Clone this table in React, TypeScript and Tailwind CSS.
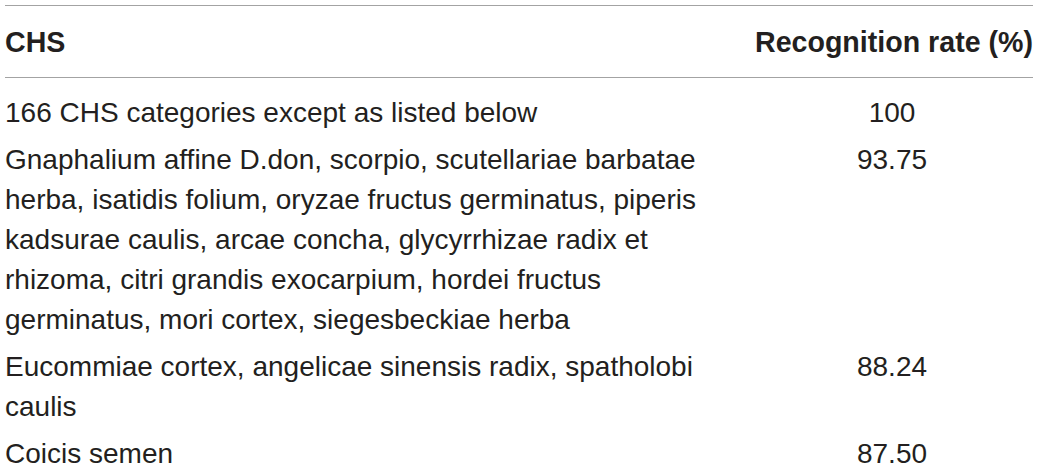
const rows = [
  { chs: ['166 CHS categories except as listed below'], rate: '100' },
  {
    chs: [
      'Gnaphalium affine D.don, scorpio, scutellariae barbatae',
      'herba, isatidis folium, oryzae fructus germinatus, piperis',
      'kadsurae caulis, arcae concha, glycyrrhizae radix et',
      'rhizoma, citri grandis exocarpium, hordei fructus',
      'germinatus, mori cortex, siegesbeckiae herba',
    ],
    rate: '93.75',
  },
  { chs: ['Eucommiae cortex, angelicae sinensis radix, spatholobi', 'caulis'], rate: '88.24' },
  { chs: ['Coicis semen'], rate: '87.50' },
]

export default function App() {
  return (
    <div className="w-[1043px] h-[468px] overflow-hidden bg-white pt-[5px] pl-[5px] pr-[10px] font-['Liberation_Sans',Arial,sans-serif] text-[28px] leading-[40px] text-[#231f20]">
      <div className="grid grid-cols-[1fr_auto] border-t border-[#a3a3a3]">
        <div className="pt-4 pb-[15px] text-[28.6px] font-bold border-b border-[#a3a3a3]">CHS</div>
        <div className="pt-4 pb-[15px] text-[28.6px] font-bold border-b border-[#a3a3a3] text-right">Recognition rate (%)</div>

        <div className="col-span-2 h-[11px]" />

        {rows.map((r) => (
          <div key={r.rate} className="contents">
            <div className="py-[3.5px] whitespace-nowrap">
              {r.chs.map((line, i) => (
                <div key={i}>{line}</div>
              ))}
            </div>
            <div className="py-[3.5px] pr-1 text-center">{r.rate}</div>
          </div>
        ))}
      </div>
    </div>
  )
}
